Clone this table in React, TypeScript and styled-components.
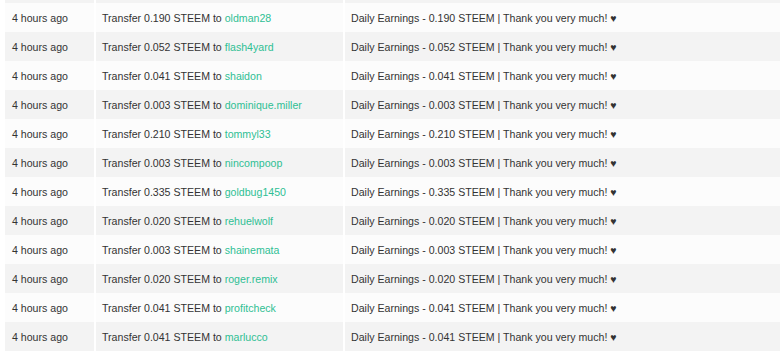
import { createGlobalStyle, styled } from "styled-components";

const GlobalStyle = createGlobalStyle`
    html, body {
        margin: 0;
        padding: 0;
        background: #ffffff;
    }
    body {
        font-family: "Liberation Sans", Arial, sans-serif;
        overflow: hidden;
    }
`;

const Wrapper = styled.div`
    height: 351px;
    overflow: hidden;
    padding-left: 5px;
`;

const Table = styled.table`
    width: calc(100% + 2px);
    border-collapse: separate;
    border-spacing: 2px 0;
    margin-left: -2px;
    table-layout: fixed;
    font-size: 10.6px;
    color: #333333;
`;

const Col = styled.col<{ $width?: number }>`
    width: ${props => (props.$width ? `${props.$width}px` : "auto")};
`;

const Row = styled.tr<{ $striped: boolean }>`
    height: 29px;
    background-color: ${props => (props.$striped ? "#f3f3f3" : "#fcfcfc")};
`;

const Spacer = styled.tr`
    height: 3px;
    background-color: #f3f3f3;

    td {
        padding: 0;
    }
`;

const Cell = styled.td<{ $first?: boolean }>`
    padding: 0 6px 0 ${props => (props.$first ? "7px" : "6px")};
    white-space: nowrap;
    overflow: hidden;
    vertical-align: middle;
`;

const User = styled.a`
    color: #2fbf94;
    text-decoration: none;
`;

const transfers = [
    { amount: "0.190", user: "oldman28" },
    { amount: "0.052", user: "flash4yard" },
    { amount: "0.041", user: "shaidon" },
    { amount: "0.003", user: "dominique.miller" },
    { amount: "0.210", user: "tommyl33" },
    { amount: "0.003", user: "nincompoop" },
    { amount: "0.335", user: "goldbug1450" },
    { amount: "0.020", user: "rehuelwolf" },
    { amount: "0.003", user: "shainemata" },
    { amount: "0.020", user: "roger.remix" },
    { amount: "0.041", user: "profitcheck" },
    { amount: "0.041", user: "marlucco" },
];

export default function App() {
    return (
        <>
            <GlobalStyle />
            <Wrapper>
                <Table>
                    <colgroup>
                        <Col $width={89} />
                        <Col $width={247} />
                        <Col />
                    </colgroup>
                    <tbody>
                        <Spacer>
                            <td />
                            <td />
                            <td />
                        </Spacer>
                        {transfers.map((t, i) => (
                            <Row key={i} $striped={i % 2 === 1}>
                                <Cell $first>4 hours ago</Cell>
                                <Cell>
                                    Transfer {t.amount} STEEM to <User href="#">{t.user}</User>
                                </Cell>
                                <Cell>Daily Earnings - {t.amount} STEEM | Thank you very much! ♥</Cell>
                            </Row>
                        ))}
                    </tbody>
                </Table>
            </Wrapper>
        </>
    );
}
